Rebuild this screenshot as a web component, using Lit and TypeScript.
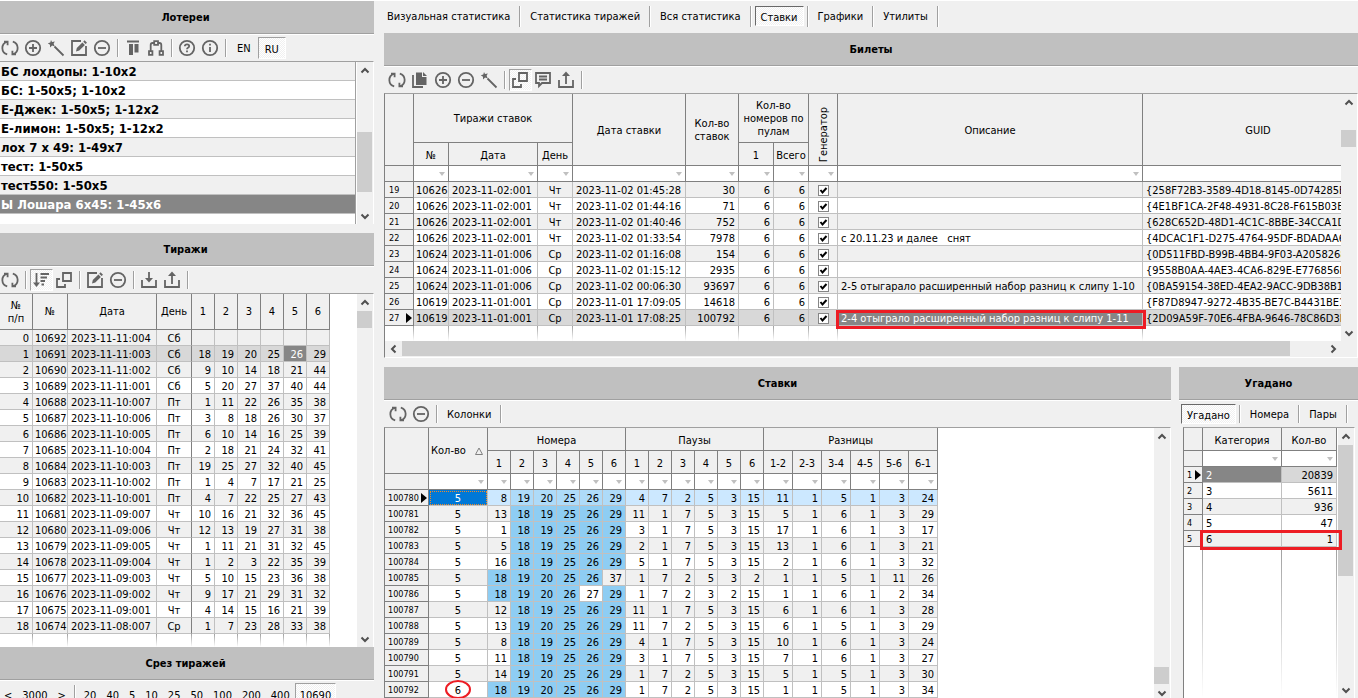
import { LitElement, html, css, svg, nothing, TemplateResult } from "lit";
import { customElement, property } from "lit/decorators.js";
import { classMap } from "lit/directives/class-map.js";
import { styleMap } from "lit/directives/style-map.js";

const circle = svg`<circle cx="9" cy="9" r="7.2"/>`;
const tray = svg`<path d="M2 9v7h14V9"/>`;

const ICONS: Record<string, TemplateResult<2>> = {
  refresh: svg`<path d="M6.200 15.400A6.600 6.600 0 0 1 5.800 2.800M3 2.600h3.600v3.600M11.800 2.600A6.600 6.600 0 0 1 12.200 15.200M15 15.400h-3.600v-3.600"/>`,
  plus: svg`${circle}<path d="M9 5v8M5 9h8"/>`,
  minus: svg`${circle}<path d="M5 9h8"/>`,
  wand: svg`<path d="M7.5 7.5l9 9"/><path class="solid" d="M4 1l1 2 2.800-.4L6.600 4.800l1.200 2.700-2.700-.9L3 8.400V5.700L.8 4.200l2.500-.6z"/>`,
  edit: svg`<path d="M11 2H2v14h14V7"/><path class="solid" d="M6 12.500l.8-3.400 5.600-5.600 2.500 2.500-5.600 5.600zM13.200 2.700l1.400-1.400 2.400 2.400-1.400 1.400z"/>`,
  columns: svg`<path class="solid" d="M3 1.500h12v2H3zM5 5h4v11H5zM10.500 5h4v8.500h-4z"/>`,
  tree: svg`<path d="M7.200 2.200h3.800v3.600H7.200zM2 12.200h3.400v3.600H2zM12.600 12.200H16v3.600h-3.400zM7 4H5.500q-1.800 0-1.800 2v6M11.200 4h1.300q1.800 0 1.800 2v6"/>`,
  help: svg`${circle}<path d="M6.800 7.300q0-2 2.200-2t2.200 1.800q0 1-1.200 1.600-1 .5-1 1.600M9 11.600v1.700"/>`,
  info: svg`${circle}<path d="M9 4.800v1.700M9 8v5"/>`,
  sort: svg`<path d="M4.500 2v12"/><path class="solid" d="M1 11.500h7l-3.500 4.500zM8.500 2H17v2H8.500zM8.500 5.500H15v2H8.500zM8.500 9H13v2H8.500zM9.500 12.500H12v2H9.500z"/>`,
  link: svg`<path d="M8 2h8v8H8zM5 8H2v8h8v-3"/>`,
  load: svg`${tray}<path d="M9 1v8"/><path class="solid" d="M5 7h8l-4 4.500z"/>`,
  save: svg`${tray}<path d="M9 4v9"/><path class="solid" d="M5 5h8L9 .5z"/>`,
  copy: svg`<path d="M2 4v12h10"/><path class="solid" d="M5 1.500h6V6h4.500v8H5zM12 1l4 4h-4z"/>`,
  comment: svg`<path d="M2 2h14v10H8l-3 3v-3H2zM5 5.500h8M5 8.500h8"/>`,
};

@customElement("tool-icon")
class ToolIcon extends LitElement {
  @property() name = "";
  static styles = css`
    :host { display: block; width: 18px; height: 18px; }
    svg { display: block; fill: none; stroke: #646464; stroke-width: 1.8; }
    .solid { fill: #646464; stroke: none; }
  `;
  render() {
    return html`<svg width="18" height="18" viewBox="0 0 18 18" aria-hidden="true">${ICONS[this.name]}</svg>`;
  }
}

@customElement("scroll-bar")
class ScrollBar extends LitElement {
  @property({ type: Boolean, reflect: true }) horizontal = false;
  @property({ type: Array }) parts: number[] = [0, 1, 0];
  static styles = css`
    :host { display: flex; flex-direction: column; width: 16px; background: #f0f0f0; }
    :host([horizontal]) { flex-direction: row; width: auto; height: 16px; }
    button { flex: none; display: grid; place-items: center; width: 16px; height: 17px; padding: 0; border: 0; background: none; }
    :host([horizontal]) button { width: 17px; height: 16px; }
    svg { fill: none; stroke: #505050; stroke-width: 2; }
    .track { flex: 1; display: grid; min-height: 0; }
    .thumb { background: #cdcdcd; }
    :host(:not([horizontal])) .thumb { grid-row: 2; margin-right: 1px; }
    :host([horizontal]) .thumb { grid-column: 2; margin-bottom: 1px; }
  `;
  render() {
    const tracks = this.parts.map((p) => `${p}fr`).join(" ");
    const style = this.horizontal ? { gridTemplateColumns: tracks } : { gridTemplateRows: tracks };
    const [back, forth] = this.horizontal ? ["M6.500 1.500L3 5l3.500 3.500", "M3.500 1.500L7 5 3.500 8.500"] : ["M1.500 6.500L5 3l3.500 3.500", "M1.500 3.500L5 7l3.500-3.500"];
    return html`
      <button aria-label="Назад"><svg width="10" height="10"><path d=${back} /></svg></button>
      <div class="track" style=${styleMap(style)}><div class="thumb"></div></div>
      <button aria-label="Вперёд"><svg width="10" height="10"><path d=${forth} /></svg></button>
    `;
  }
}

const LOTTERIES = [
  "БС лохдопы: 1-10x2", "БС: 1-50x5; 1-10x2", "Е-Джек: 1-50x5; 1-12x2", "Е-лимон: 1-50x5; 1-12x2",
  "лох 7 x 49: 1-49x7", "тест: 1-50x5", "тест550: 1-50x5", "Ы Лошара 6x45: 1-45x6",
];

const DRAWS = [
  "10692|2023-11-11:004|Сб|",
  "10691|2023-11-11:003|Сб|18 19 20 25 26 29",
  "10690|2023-11-11:002|Сб|9 10 14 18 21 44",
  "10689|2023-11-11:001|Сб|5 20 27 37 40 44",
  "10688|2023-11-10:007|Пт|1 11 22 26 35 38",
  "10687|2023-11-10:006|Пт|3 8 18 26 30 37",
  "10686|2023-11-10:005|Пт|6 10 14 16 25 39",
  "10685|2023-11-10:004|Пт|2 18 21 24 32 41",
  "10684|2023-11-10:003|Пт|19 25 27 32 40 45",
  "10683|2023-11-10:002|Пт|1 4 7 17 21 25",
  "10682|2023-11-10:001|Пт|4 7 22 25 27 43",
  "10681|2023-11-09:007|Чт|10 16 21 32 36 45",
  "10680|2023-11-09:006|Чт|12 13 19 27 31 38",
  "10679|2023-11-09:005|Чт|1 11 21 31 32 45",
  "10678|2023-11-09:004|Чт|1 2 3 22 35 39",
  "10677|2023-11-09:003|Чт|5 10 15 23 36 38",
  "10676|2023-11-09:002|Чт|9 17 21 29 31 32",
  "10675|2023-11-09:001|Чт|4 14 15 16 21 39",
  "10674|2023-11-08:007|Ср|1 7 23 28 33 38",
].map((line) => line.split("|"));

const TICKETS = [
  "19|10626|2023-11-02:001|Чт|2023-11-02 01:45:28|30||{258F72B3-3589-4D18-8145-0D74285BC",
  "20|10626|2023-11-02:001|Чт|2023-11-02 01:44:16|71||{4E1BF1CA-2F48-4931-8C28-F615B03BE",
  "21|10626|2023-11-02:001|Чт|2023-11-02 01:40:46|752||{628C652D-48D1-4C1C-8BBE-34CCA1D4",
  "22|10626|2023-11-02:001|Чт|2023-11-02 01:33:54|7978|с 20.11.23 и далее   снят|{4DCAC1F1-D275-4764-95DF-BDADAA67",
  "23|10624|2023-11-01:006|Ср|2023-11-02 01:16:08|154||{0D511FBD-B99B-4BB4-9F03-A2058268E",
  "24|10624|2023-11-01:006|Ср|2023-11-02 01:15:12|2935||{9558B0AA-4AE3-4CA6-829E-E776856B3",
  "25|10624|2023-11-01:006|Ср|2023-11-02 00:06:30|93697|2-5 отыгарало расширенный набор разниц к слипу 1-10|{0BA59154-38ED-4EA2-9ACC-9DB38B1B",
  "26|10619|2023-11-01:001|Ср|2023-11-01 17:09:05|14618||{F87D8947-9272-4B35-BE7C-B4431BE14",
  "27|10619|2023-11-01:001|Ср|2023-11-01 17:08:25|100792|2-4 отыграло расширенный набор разниц к слипу 1-11|{2D09A59F-70E6-4FBA-9646-78C86D3EB",
].map((line) => line.split("|"));

const DRAWN = new Set([18, 19, 20, 25, 26, 29]);
const BETS = [
  "5 8 19 20 25 26 29 4 7 2 5 3 15 11 1 5 1 3 24",
  "5 13 18 19 25 26 29 11 1 7 5 3 15 5 1 6 1 3 29",
  "5 1 18 19 25 26 29 3 1 7 5 3 15 17 1 6 1 3 17",
  "5 5 18 19 25 26 29 2 1 7 5 3 15 13 1 6 1 3 21",
  "5 16 18 19 25 26 29 5 1 7 5 3 15 2 1 6 1 3 32",
  "5 18 19 20 25 26 37 1 7 2 5 3 2 1 1 5 1 11 26",
  "5 18 19 20 26 27 29 1 7 2 3 2 15 1 1 6 1 2 34",
  "5 12 18 19 25 26 29 11 1 7 5 3 15 6 1 6 1 3 28",
  "5 13 19 20 25 26 29 11 7 2 5 3 15 6 1 5 1 3 29",
  "5 8 18 19 25 26 29 4 1 7 5 3 15 10 1 6 1 3 24",
  "5 11 18 19 25 26 29 3 1 7 5 3 15 7 1 6 1 3 27",
  "5 14 19 20 25 26 29 1 7 2 5 3 15 5 1 5 1 3 30",
  "6 18 19 20 25 26 29 1 7 2 5 3 15 1 1 5 1 3 34",
].map((line) => line.split(" ").map(Number));

const GUESSED = [[2, 20839], [3, 5611], [4, 936], [5, 47], [6, 1]];
const SIX = [1, 2, 3, 4, 5, 6];
const DIFFS = ["1-2", "2-3", "3-4", "4-5", "5-6", "6-1"];

const sep = html`<span class="sep"></span>`;
const tool = (name: string, label: string, pressed = false) =>
  html`<button class=${classMap({ tool: true, pressed })} aria-label=${label} title=${label}><tool-icon name=${name}></tool-icon></button>`;
const word = (label: string, pressed = false) =>
  html`<button class=${classMap({ word: true, pressed })}>${label}</button>`;
const cols = (widths: number[]) =>
  html`<colgroup>${widths.map((w) => html`<col style=${styleMap({ width: `${w}px` })} />`)}</colgroup>`;
const filter = (label: string) => html`<td class="filter"><div>
  <select aria-label="Фильтр: ${label}"><option></option></select>
  <svg width="6" height="4" viewBox="0 0 6 4" aria-hidden="true"><path d="M0 0h6L3 4z" /></svg></div></td>`;
const filters = (labels: string[]) => html`<tr class="filters"><th></th>${labels.map(filter)}</tr>`;
const fill = (n: number) => html`<tr class="fill">${Array.from({ length: n }, () => html`<td></td>`)}</tr>`;
const marker = svg`<svg class="marker" width="6" height="10" viewBox="0 0 6 10" aria-hidden="true"><path d="M0 0l6 5-6 5z"/></svg>`;

@customElement("app-root")
class AppRoot extends LitElement {
  static styles = css`
    :host {
      display: grid;
      grid-template-columns: 374px minmax(0, 1fr);
      column-gap: 10px;
      height: 100vh;
      overflow: hidden;
      background: #f0f0f0;
      border-top: 1px solid #fff;
      box-sizing: border-box;
      color: #000;
      font: 11px/13px "DejaVu Sans Condensed", "Noto Sans", sans-serif;
    }
    * { box-sizing: border-box; }
    button, select { font: inherit; color: inherit; }
    .column, .panel { display: flex; flex-direction: column; min-width: 0; min-height: 0; }
    .column { height: calc(100vh - 1px); }
    .grow { flex: 1; }
    .spaced { margin-bottom: 9px; }
    h2 {
      flex: none; margin: 0; height: 34px; line-height: 34px; text-align: center;
      font-size: 11px; font-weight: bold;
      background: #c0c0c0; border-bottom: 1px solid #fff; box-shadow: inset 0 -1px #a0a0a0;
    }
    .left h2 { padding-right: 3px; }
    .toolbar { flex: none; display: flex; align-items: center; height: 26px; white-space: nowrap; }
    .left .toolbar { margin-left: -1px; }
    .tickets .toolbar { padding-left: 2px; }
    .guessed .toolbar { padding-left: 2px; }
    .bets .toolbar { padding-left: 3px; }
    .column .tabs { height: 32px; margin-left: -3px; padding-bottom: 2px; }
    .slice { flex: 0 0 51px; overflow: hidden; }
    .tool, .word { flex: none; display: grid; place-items: center; height: 22px; padding: 0; border: 1px solid transparent; background: none; }
    .tool { width: 23px; }
    .tool tool-icon { margin-left: -1px; }
    .word { padding: 0 5px; }
    .lotteries .word { padding: 0 6px; }
    .slice .word { padding: 2px 4px 0; }
    .pressed {
      border-color: #a0a0a0 #fff #fff #a0a0a0;
      background: repeating-conic-gradient(#fff 0 25%, #f0f0f0 0 50%) 0 0 / 2px 2px;
    }
    .word.pressed { padding-top: 2px; }
    .tabs .pressed, .guessed .pressed { height: 20px; border-color: #696969 #fff #fff #696969; }
    .sep { flex: none; width: 2px; height: 18px; margin: 0 3px; background: linear-gradient(90deg, #a0a0a0 50%, #fff 50%); }
    .tabs .sep { height: 21px; }

    .box {
      display: grid; grid-template-columns: minmax(0, 1fr) 16px; min-height: 0;
      background: #fff; border: 1px solid #fff; border-top-color: #a0a0a0; border-left-color: #808080;
    }
    .left .box { border-left: 0; border-bottom: 0; }
    .lotteries .box { height: 163px; flex: none; }
    .bets .box, .guessed .box { border-bottom: 0; }
    .guessed .box { margin: 0 3px 0 4px; }
    .bets scroll-bar { margin-bottom: -3px; }
    .view { overflow: hidden; min-width: 0; min-height: 0; }
    .guessed .view { overflow: visible; }

    ul { list-style: none; margin: 0 1px 0 0; padding: 0; border-right: 1px solid #a0a0a0; overflow: hidden; }
    li { height: 19px; line-height: 20px; padding-left: 1px; border-bottom: 1px solid #c0c0c0; font-size: 13px; font-weight: bold; white-space: nowrap; }
    li:nth-child(odd) { background: #f0f0f0; }
    li.current { background: #868686; color: #fff; }

    table { table-layout: fixed; width: 0; height: 100%; border-spacing: 0; }
    th, td { padding: 0; overflow: hidden; white-space: nowrap; }
    thead th { font-weight: normal; background: #f0f0f0; border: solid #808080; border-width: 0 1px 1px 0; white-space: normal; height: 23px; padding-top: 2px; }
    .tall th { height: 36px; padding-top: 0; }
    .group th { height: 49px; padding-top: 1px; }
    .filters th, .filters td { height: 16px; border: solid #808080; border-width: 0 1px 1px 0; }
    .filter div { display: grid; grid-template-columns: minmax(0, 1fr) 9px; align-items: center; height: 15px; }
    .filter select { grid-area: 1 / 1 / 2 / 3; width: 100%; height: 15px; appearance: none; border: 0; padding: 0; background: #fff; }
    .filter svg { grid-area: 1 / 2; fill: #c0c0c0; }
    .turned { vertical-align: bottom; }
    .turned span { display: inline-block; writing-mode: vertical-rl; transform: rotate(180deg); padding-top: 3px; vertical-align: bottom; }
    thead .sorted { text-align: left; padding: 0 0 0 2px; }
    .sorted div { display: flex; align-items: center; justify-content: space-between; padding-right: 4px; }
    .sorted svg { fill: none; stroke: #808080; }

    tbody th, tbody td { height: 16px; line-height: 13px; padding-top: 2px; border: solid #c0c0c0; border-width: 0 1px 1px 0; }
    tbody tr:nth-child(odd) { background: #f0f0f0; }
    .bets tbody tr:nth-child(odd) { background: #fff; }
    .bets tbody tr:nth-child(even) { background: #f0f0f0; }
    tbody th { position: relative; font-weight: normal; font-size: 9px; text-align: left; padding-top: 1px; padding-left: 3px; background: #f0f0f0; border-color: #808080; }
    .marker { position: absolute; right: 1px; top: 3px; }
    .panel tbody .fill { background: none; }
    tbody .fill td { height: auto; padding: 0; line-height: 15px; border: 0; background: linear-gradient(#a0a0a0, #fff) right / 1px 100% no-repeat; }
    .num { text-align: right; padding-right: 3px; }
    .mid { text-align: center; }
    .txt { padding-left: 3px; white-space: pre; }
    .id { padding-left: 2px; }
    .edge { border-right-color: #808080; }
    tbody tr.row-current { background: #d8d8d8; }
    tbody td.cell-current { background: #868686; color: #fff; }
    .hit { background: #8ecdf3; }
    .bets tbody tr.bet-current { background: #cce8ff; }
    .bet-current .hit { background: #aedbf9; }
    .bet-current .cell-focus { background: #0078d7; color: #fff; outline: 1px dotted #f08c28; outline-offset: -2px; }
    .tickets tbody th { padding-left: 4px; }
    .tickets td input {
      appearance: none; display: block; width: 11px; height: 11px; margin: 0 auto; border: 1px solid #868686; background: #fff;
    }
    .check { position: relative; }
    .check svg { position: absolute; left: 10px; top: 4px; fill: none; stroke: #000; stroke-width: 2; pointer-events: none; }

    .framed { position: relative; overflow: visible; }
    .frame { position: absolute; z-index: 1; border: 3px solid #ed1c24; pointer-events: none; }
    .around-note { inset: 0 -4px -4px -2px; }
    .around-row { top: -1px; bottom: -4px; left: -3px; width: 142px; }
    .ring { inset: -2px 16px; border-width: 2px; border-radius: 50%; }
    .lower { display: grid; grid-template-columns: minmax(0, 1fr) 179px; column-gap: 8px; min-height: 0; }
    .corner { background: #f0f0f0; }
  `;

  private lotteries() {
    return html`<section class="panel lotteries spaced">
      <h2>Лотереи</h2>
      <div class="toolbar">
        ${tool("refresh", "Обновить")}${tool("plus", "Добавить")}${tool("wand", "Мастер")}${tool("edit", "Изменить")}${tool("minus", "Удалить")}${sep}
        ${tool("columns", "Столбцы")}${tool("tree", "Структура")}${sep}${tool("help", "Справка")}${tool("info", "О программе")}${sep}
        ${word("EN")}${word("RU", true)}
      </div>
      <div class="box">
        <ul>${LOTTERIES.map((name, i) => html`<li class=${classMap({ current: i === 7 })}>${name}</li>`)}</ul>
        <scroll-bar .parts=${[53, 60, 15]}></scroll-bar>
      </div>
    </section>`;
  }

  private draws() {
    return html`<section class="panel grow">
      <h2>Тиражи</h2>
      <div class="toolbar">
        ${tool("refresh", "Обновить")}${sep}${tool("sort", "Сортировка", true)}${tool("link", "Связать")}${sep}
        ${tool("edit", "Изменить")}${tool("minus", "Удалить")}${sep}${tool("load", "Импорт")}${tool("save", "Экспорт")}${sep}
      </div>
      <div class="box grow"><div class="view"><table>
        ${cols([33, 35, 89, 35, 23, 23, 23, 23, 23, 23])}
        <thead><tr class="tall"><th>№<br />п/п</th><th>№</th><th>Дата</th><th>День</th>${SIX.map((n) => html`<th>${n}</th>`)}</tr></thead>
        <tbody>
          ${DRAWS.map(([id, date, day, nums], i) => {
            const values = nums.split(" ");
            return html`<tr class=${classMap({ "row-current": i === 1 })}>
              <td class="num">${i}</td><td class="id">${id}</td><td class="txt">${date}</td><td class="mid edge">${day}</td>
              ${SIX.map((n) => html`<td class=${classMap({ num: true, "cell-current": i === 1 && n === 5 })}>${values[n - 1] ?? nothing}</td>`)}
            </tr>`;
          })}
          ${fill(10)}
        </tbody>
      </table></div><scroll-bar .parts=${[0, 17, 301]}></scroll-bar></div>
    </section>`;
  }

  private tickets() {
    return html`<section class="panel tickets spaced">
      <h2>Билеты</h2>
      <div class="toolbar">
        ${tool("refresh", "Обновить")}${tool("copy", "Копировать")}${tool("plus", "Добавить")}${tool("minus", "Удалить")}${tool("wand", "Мастер")}${sep}
        ${tool("link", "Связать", true)}${tool("comment", "Описание")}${tool("save", "Экспорт")}${sep}
      </div>
      <div class="box"><div class="view"><table>
        ${cols([29, 35, 89, 35, 113, 53, 35, 35, 29, 305, 231])}
        <thead>
          <tr class="group"><th rowspan="2"></th><th colspan="3">Тиражи ставок</th><th rowspan="2">Дата ставки</th><th rowspan="2">Кол-во ставок</th>
            <th colspan="2">Кол-во номеров по пулам</th><th rowspan="2" class="turned"><span>Генератор</span></th><th rowspan="2">Описание</th><th rowspan="2">GUID</th></tr>
          <tr><th>№</th><th>Дата</th><th>День</th><th>1</th><th>Всего</th></tr>
          ${filters(["№", "Дата", "День", "Дата ставки", "Кол-во ставок", "1", "Всего", "Генератор", "Описание", "GUID"])}
        </thead>
        <tbody>
          ${TICKETS.map(([n, id, date, day, time, count, note, guid], i) => {
            const current = i === 8;
            return html`<tr class=${classMap({ "row-current": current })}>
              <th>${n}${current ? marker : nothing}</th><td class="id">${id}</td><td class="txt">${date}</td><td class="mid">${day}</td>
              <td class="txt">${time}</td><td class="num">${count}</td><td class="num">6</td><td class="num">6</td>
              <td class="check"><input type="checkbox" checked aria-label="Генератор ${n}" /><svg width="9" height="9" aria-hidden="true"><path d="M1.500 4l2 2.500L7.500 2" /></svg></td>
              <td class=${classMap({ txt: true, "cell-current": current, framed: current })}>${note}${current ? html`<span class="frame around-note"></span>` : nothing}</td>
              <td class="txt">${guid}</td>
            </tr>`;
          })}
          <tr class="fill">${Array.from({ length: 11 }, () => html`<td>&nbsp;</td>`)}</tr>
        </tbody>
      </table></div><scroll-bar .parts=${[19, 17, 177]}></scroll-bar>
      <scroll-bar horizontal .parts=${[0, 888, 34]}></scroll-bar><span class="corner"></span></div>
    </section>`;
  }

  private bets() {
    return html`<section class="panel bets">
      <h2>Ставки</h2>
      <div class="toolbar">${tool("refresh", "Обновить")}${tool("minus", "Удалить")}${sep}${word("Колонки")}${sep}</div>
      <div class="box grow"><div class="view"><table>
        ${cols([44, 59, ...Array(12).fill(23), ...Array(6).fill(29)])}
        <thead>
          <tr><th rowspan="2"></th><th rowspan="2" class="sorted"><div>Кол-во<svg width="8" height="8"><path d="M4 1L7.500 7.500h-7z" /></svg></div></th>
            <th colspan="6">Номера</th><th colspan="6">Паузы</th><th colspan="6">Разницы</th></tr>
          <tr>${[...SIX, ...SIX, ...DIFFS].map((n) => html`<th>${n}</th>`)}</tr>
          ${filters(["Кол-во", ...SIX.map((n) => `номер ${n}`), ...SIX.map((n) => `пауза ${n}`), ...DIFFS])}
        </thead>
        <tbody>
          ${BETS.map(([count, ...cells], i) => html`<tr class=${classMap({ "bet-current": i === 0 })}>
            <th>${100780 + i}${i === 0 ? marker : nothing}</th>
            <td class=${classMap({ mid: true, "cell-focus": i === 0, framed: count === 6 })}>${count}${count === 6 ? html`<span class="frame ring"></span>` : nothing}</td>
            ${cells.map((v, c) => html`<td class=${classMap({ num: true, hit: c < 6 && DRAWN.has(v) })}>${v}</td>`)}
          </tr>`)}
          ${fill(20)}
        </tbody>
      </table></div><scroll-bar .parts=${[222, 17, 0]}></scroll-bar></div>
    </section>`;
  }

  private guessed() {
    return html`<section class="panel guessed">
      <h2>Угадано</h2>
      <div class="toolbar">${word("Угадано", true)}${sep}${word("Номера")}${sep}${word("Пары")}${sep}</div>
      <div class="box grow"><div class="view"><table>
        ${cols([19, 79, 55])}
        <thead><tr><th></th><th>Категория</th><th>Кол-во</th></tr>${filters(["Категория", "Кол-во"])}</thead>
        <tbody>
          ${GUESSED.map(([hits, count], i) => html`<tr class=${classMap({ "row-current": i === 0 })}>
            <th>${i + 1}${i === 0 ? marker : nothing}</th>
            <td class=${classMap({ txt: true, "cell-current": i === 0, framed: i === 4 })}>${hits}${i === 4 ? html`<span class="frame around-row"></span>` : nothing}</td>
            <td class="num">${count}</td>
          </tr>`)}
          ${fill(3)}
        </tbody>
      </table></div><scroll-bar .parts=${[0, 131, 105]}></scroll-bar></div>
    </section>`;
  }

  render() {
    return html`
      <div class="column left">
        ${this.lotteries()}${this.draws()}
        <section class="panel slice">
          <h2>Срез тиражей</h2>
          <div class="toolbar">
            ${word("<")}${word("3000")}${word(">")}${sep}
            ${["20", "40", "5", "10", "25", "50", "100", "200", "400"].map((n) => word(n))}${word("10690", true)}
          </div>
        </section>
      </div>
      <div class="column">
        <nav class="toolbar tabs">
          ${["Визуальная статистика", "Статистика тиражей", "Вся статистика", "Ставки", "Графики", "Утилиты"].map((t) => html`${word(t, t === "Ставки")}${sep}`)}
        </nav>
        ${this.tickets()}
        <div class="lower grow">${this.bets()}${this.guessed()}</div>
      </div>
    `;
  }
}
